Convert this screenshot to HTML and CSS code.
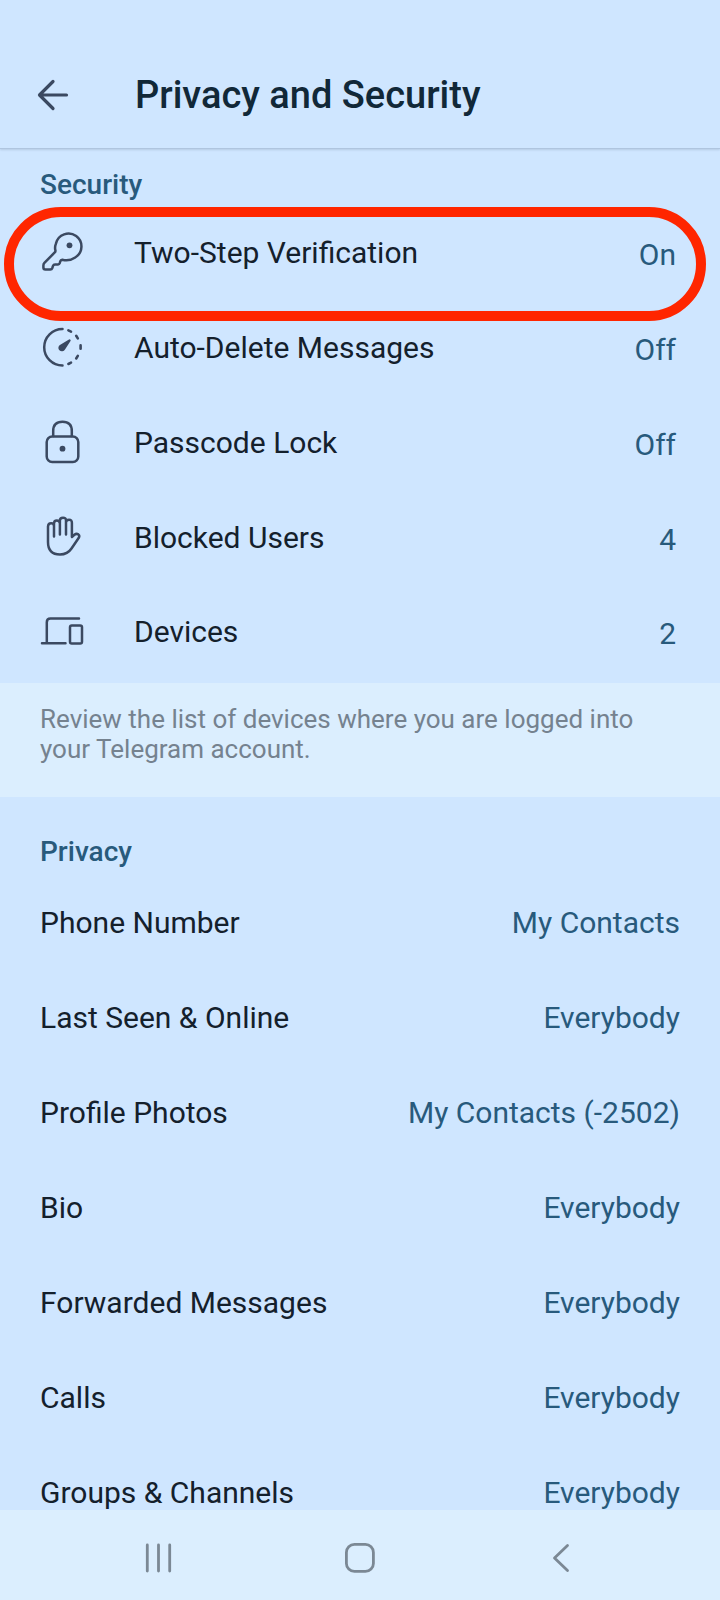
FILE: index.html
```html
<!DOCTYPE html>
<html lang="en">
<head>
<meta charset="utf-8">
<title>Privacy and Security</title>
<link rel="stylesheet" href="styles.css">
</head>
<body>
<div class="screen">
  <header class="header">
    <svg class="back" width="36" height="36" viewBox="0 0 36 36"><path d="M31.500 18H5M18 4.500L4.500 18L18 31.500"/></svg>
    <h1 class="title">Privacy and Security</h1>
  </header>
  <main class="content">
    <section class="security">
      <h2 class="heading">Security</h2>
      <div class="row">
        <svg class="icon" viewBox="0 0 48 48"><path transform="translate(-1.200 -2.800)" d="M18.700 27.500L8.600 37.600Q7.600 38.600 7.600 40.200V42.200Q7.600 44.200 9.600 44.200H14.500Q16 44.200 16.500 42.800L17.200 40.600Q17.700 39.200 19.200 39.200H22.300Q23.500 39.200 23.900 38L24.400 36.300Q24.900 34.800 26.500 34.600Q33.500 36.400 39.400 32.300A12.900 12.900 0 1 0 20.200 18.200Q18.700 22.200 19.600 25.200Q19.900 26.400 18.700 27.500Z"/><circle class="solid" cx="32.500" cy="17.300" r="2.900"/></svg>
        <span class="label">Two-Step Verification</span><span class="value">On</span>
      </div>
      <div class="row">
        <svg class="icon" viewBox="0 0 48 48"><path d="M25.500 5.900A18.300 18.300 0 0 0 25.500 42.500"/><path class="dash" d="M31.400 7.400L34 8.600M39.200 12.800L40.800 15.400M43.600 22.400V25.800M40.800 32.900L39.200 35.500M34 39.700L31.400 41"/><path class="solid" d="M33.400 16.800Q34 17.300 33.500 18L28 26.400A3.500 3.500 0 1 1 23.300 21.700L32 16.400Q32.900 16 33.400 16.800Z"/></svg>
        <span class="label">Auto-Delete Messages</span><span class="value">Off</span>
      </div>
      <div class="row">
        <svg class="icon" viewBox="0 0 48 48"><rect x="9.700" y="18.500" width="31.600" height="25.500" rx="5.500"/><path d="M16.200 18V13Q16.200 3.700 25.500 3.700T34.800 13V18"/><circle class="solid" cx="25.500" cy="30.700" r="2.900"/></svg>
        <span class="label">Passcode Lock</span><span class="value">Off</span>
      </div>
      <div class="row">
        <svg class="icon" viewBox="0 0 48 48"><path d="M17 23.500V10.500Q17 7.500 19.800 7.500T22.900 10.500V21.500M22.900 10V7.500Q22.900 4.700 26 4.700T29 7.500V21.500M29 9.500Q29 6.700 32 6.700T34.900 10V23.500M17 13Q17 10.300 14.100 10.300T11 13.500V29Q11 41.500 23 41.500Q30.500 41.500 34.500 35.500L41.800 24.800Q43 22.800 41.300 21.400Q39.300 20.200 37.400 21.800L34.900 24"/></svg>
        <span class="label">Blocked Users</span><span class="value">4</span>
      </div>
      <div class="row">
        <svg class="icon" viewBox="0 0 48 48"><path d="M42 11.600H13.500Q9.800 11.600 9.800 15.300V36.200M5 36.200H28.500"/><rect x="33" y="18.500" width="12" height="18" rx="1.800"/></svg>
        <span class="label">Devices</span><span class="value">2</span>
      </div>
    </section>
    <p class="note">Review the list of devices where you are logged into<br>your Telegram account.</p>
    <section class="privacy">
      <h2 class="heading">Privacy</h2>
      <div class="row"><span class="label">Phone Number</span><span class="value">My Contacts</span></div>
      <div class="row"><span class="label">Last Seen &amp; Online</span><span class="value">Everybody</span></div>
      <div class="row"><span class="label">Profile Photos</span><span class="value">My Contacts (-2502)</span></div>
      <div class="row"><span class="label">Bio</span><span class="value">Everybody</span></div>
      <div class="row"><span class="label">Forwarded Messages</span><span class="value">Everybody</span></div>
      <div class="row"><span class="label">Calls</span><span class="value">Everybody</span></div>
      <div class="row"><span class="label">Groups &amp; Channels</span><span class="value">Everybody</span></div>
    </section>
  </main>
  <nav class="navbar">
    <svg viewBox="0 0 40 40"><path d="M8.300 7V33M19.500 7V33M30.700 7V33"/></svg>
    <svg viewBox="0 0 40 40"><rect x="6.400" y="6.400" width="27" height="27" rx="8"/></svg>
    <svg viewBox="0 0 40 40"><path d="M27.500 7.500L14.500 20L27.500 32.500"/></svg>
  </nav>
  <div class="highlight"></div>
</div>
</body>
</html>
```

FILE: styles.css
```css
* { box-sizing: border-box; }
body {
  margin: 0;
  font-family: Roboto, "Liberation Sans", sans-serif;
  color: #14202c;
  background: #cfe6ff;
}
h1, h2, p { margin: 0; }
svg { flex: none; fill: none; stroke: #3b4961; stroke-linecap: round; stroke-linejoin: round; }
.screen {
  position: relative;
  display: flex;
  flex-direction: column;
  width: 720px;
  height: 1600px;
  overflow: hidden;
}
.header {
  display: flex;
  align-items: center;
  gap: 64px;
  flex: none;
  height: 149px;
  padding: 42px 0 0 35px;
  border-bottom: 1px solid #afc5df;
  box-shadow: 0 1px 2px #b4cae4;
}
.back { stroke-width: 3.200; }
.title { font-size: 38px; line-height: 44px; font-weight: 500; color: #112838; }
.content { flex: 1; min-height: 0; overflow: hidden; padding-top: 1px; }
.heading { font-size: 28px; line-height: 32px; font-weight: 500; color: #285a7c; }
.security { height: 533px; }
.security .heading { height: 55.800px; padding: 19px 40px 0; }
.row {
  display: flex;
  align-items: center;
  height: 94.800px;
  padding: 0 40px;
  font-size: 30px;
  line-height: 36px;
}
.icon { width: 48px; height: 48px; margin: 0 49px 0 -3px; stroke-width: 2.500; }
.security .row .icon { transform: translateY(-1px); }
.icon .solid { fill: #3b4961; stroke: none; }
.icon .dash { stroke-width: 2.600; }
.value { margin-left: auto; color: #285a7c; }
.security .value { padding-top: 4px; padding-right: 4px; }
.note {
  height: 114px;
  padding: 21px 40px 0;
  font-size: 26px;
  line-height: 30px;
  color: #75828f;
  background: #dbeefe;
}
.privacy .heading { height: 78px; padding: 39px 40px 0; }
.privacy .row { height: 95px; }
.navbar {
  display: flex;
  justify-content: space-between;
  align-items: center;
  flex: none;
  height: 90px;
  padding: 5px 140px 0 139px;
  background: #dbeefe;
}
.navbar svg { width: 40px; height: 40px; stroke: #7b8894; stroke-width: 2.800; }
.highlight {
  position: absolute;
  left: 4px;
  top: 207px;
  width: 702px;
  height: 114px;
  border: 10px solid #ff2600;
  border-radius: 57px;
}
```
